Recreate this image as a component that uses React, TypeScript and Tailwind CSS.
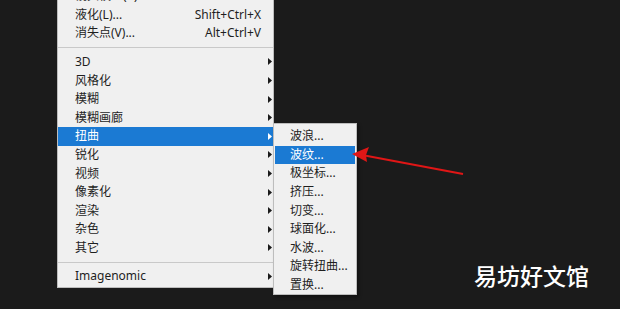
import React from 'react';

type Item =
  | { kind: 'item'; label: string; shortcut?: string; sub?: boolean; active?: boolean }
  | { kind: 'sep' };

const mainItems: Item[] = [
  { kind: 'item', label: '镜头校正(R)...', shortcut: 'Shift+Ctrl+R' },
  { kind: 'item', label: '液化(L)...', shortcut: 'Shift+Ctrl+X' },
  { kind: 'item', label: '消失点(V)...', shortcut: 'Alt+Ctrl+V' },
  { kind: 'sep' },
  { kind: 'item', label: '3D', sub: true },
  { kind: 'item', label: '风格化', sub: true },
  { kind: 'item', label: '模糊', sub: true },
  { kind: 'item', label: '模糊画廊', sub: true },
  { kind: 'item', label: '扭曲', sub: true, active: true },
  { kind: 'item', label: '锐化', sub: true },
  { kind: 'item', label: '视频', sub: true },
  { kind: 'item', label: '像素化', sub: true },
  { kind: 'item', label: '渲染', sub: true },
  { kind: 'item', label: '杂色', sub: true },
  { kind: 'item', label: '其它', sub: true },
  { kind: 'sep' },
  { kind: 'item', label: 'Imagenomic', sub: true },
];

const subItems = ['波浪...', '波纹...', '极坐标...', '挤压...', '切变...', '球面化...', '水波...', '旋转扭曲...', '置换...'];

function Caret({ white }: { white?: boolean }) {
  return (
    <svg width="4" height="7" viewBox="0 0 4 7" className="shrink-0">
      <path d="M0 0 L4 3.5 L0 7 Z" fill={white ? '#ffffff' : '#1a1a1a'} />
    </svg>
  );
}

export default function App() {
  return (
    <div
      className="relative w-[620px] h-[309px] overflow-hidden bg-[#1b1b1b]"
      style={{ fontFamily: '"Noto Sans", "Noto Sans CJK SC", sans-serif' }}
    >
      {/* main filter menu, scrolled so its top is off screen */}
      <div className="ml-[57px] mt-[-17px] w-[217px] bg-[#f0f0f0] border border-[#bdbdbd] pt-[3px] pb-[1px] text-[12px] text-[#1e1e1e]">
        {mainItems.map((it, i) =>
          it.kind === 'sep' ? (
            <div key={i} className="h-[9.9px] flex items-center">
              <div className="w-full h-px bg-[#c9c9c9]" />
            </div>
          ) : (
            <div
              key={i}
              className={`h-[18.6px] flex items-center pl-[17px] pr-[1px] ${
                it.active ? 'bg-[#1b7ad3] text-white' : ''
              }`}
            >
              <span className="flex-1 leading-none">{it.label}</span>
              {it.shortcut && <span className="leading-none mr-[11px]">{it.shortcut}</span>}
              {it.sub && <Caret white={it.active} />}
            </div>
          )
        )}
      </div>

      {/* distort submenu */}
      <div className="absolute left-[273px] top-[123px] w-[84px] bg-[#f0f0f0] border border-[#bdbdbd] pt-[3px] px-[1px] text-[12px] text-[#1e1e1e] shadow-[2px_2px_3px_rgba(0,0,0,0.35)]">
        {subItems.map((s, i) => (
          <div
            key={s}
            className={`h-[18.6px] flex items-center pl-[15px] ${i === 1 ? 'bg-[#1b7ad3] text-white' : ''}`}
          >
            <span className="leading-none">{s}</span>
          </div>
        ))}
      </div>

      {/* red pointer arrow */}
      <svg className="absolute left-0 top-0" width="620" height="309" viewBox="0 0 620 309">
        <line x1="463" y1="174" x2="362" y2="155" stroke="#e01616" strokeWidth="2.2" />
        <path d="M352 154 L369 147 L366 155 L367 162 Z" fill="#e01616" />
      </svg>

      {/* watermark */}
      <div
        className="absolute left-[474px] top-[264px] text-[23px] font-medium text-white leading-none"
        style={{ fontFamily: '"Noto Sans CJK SC", sans-serif' }}
      >
        易坊好文馆
      </div>
    </div>
  );
}
